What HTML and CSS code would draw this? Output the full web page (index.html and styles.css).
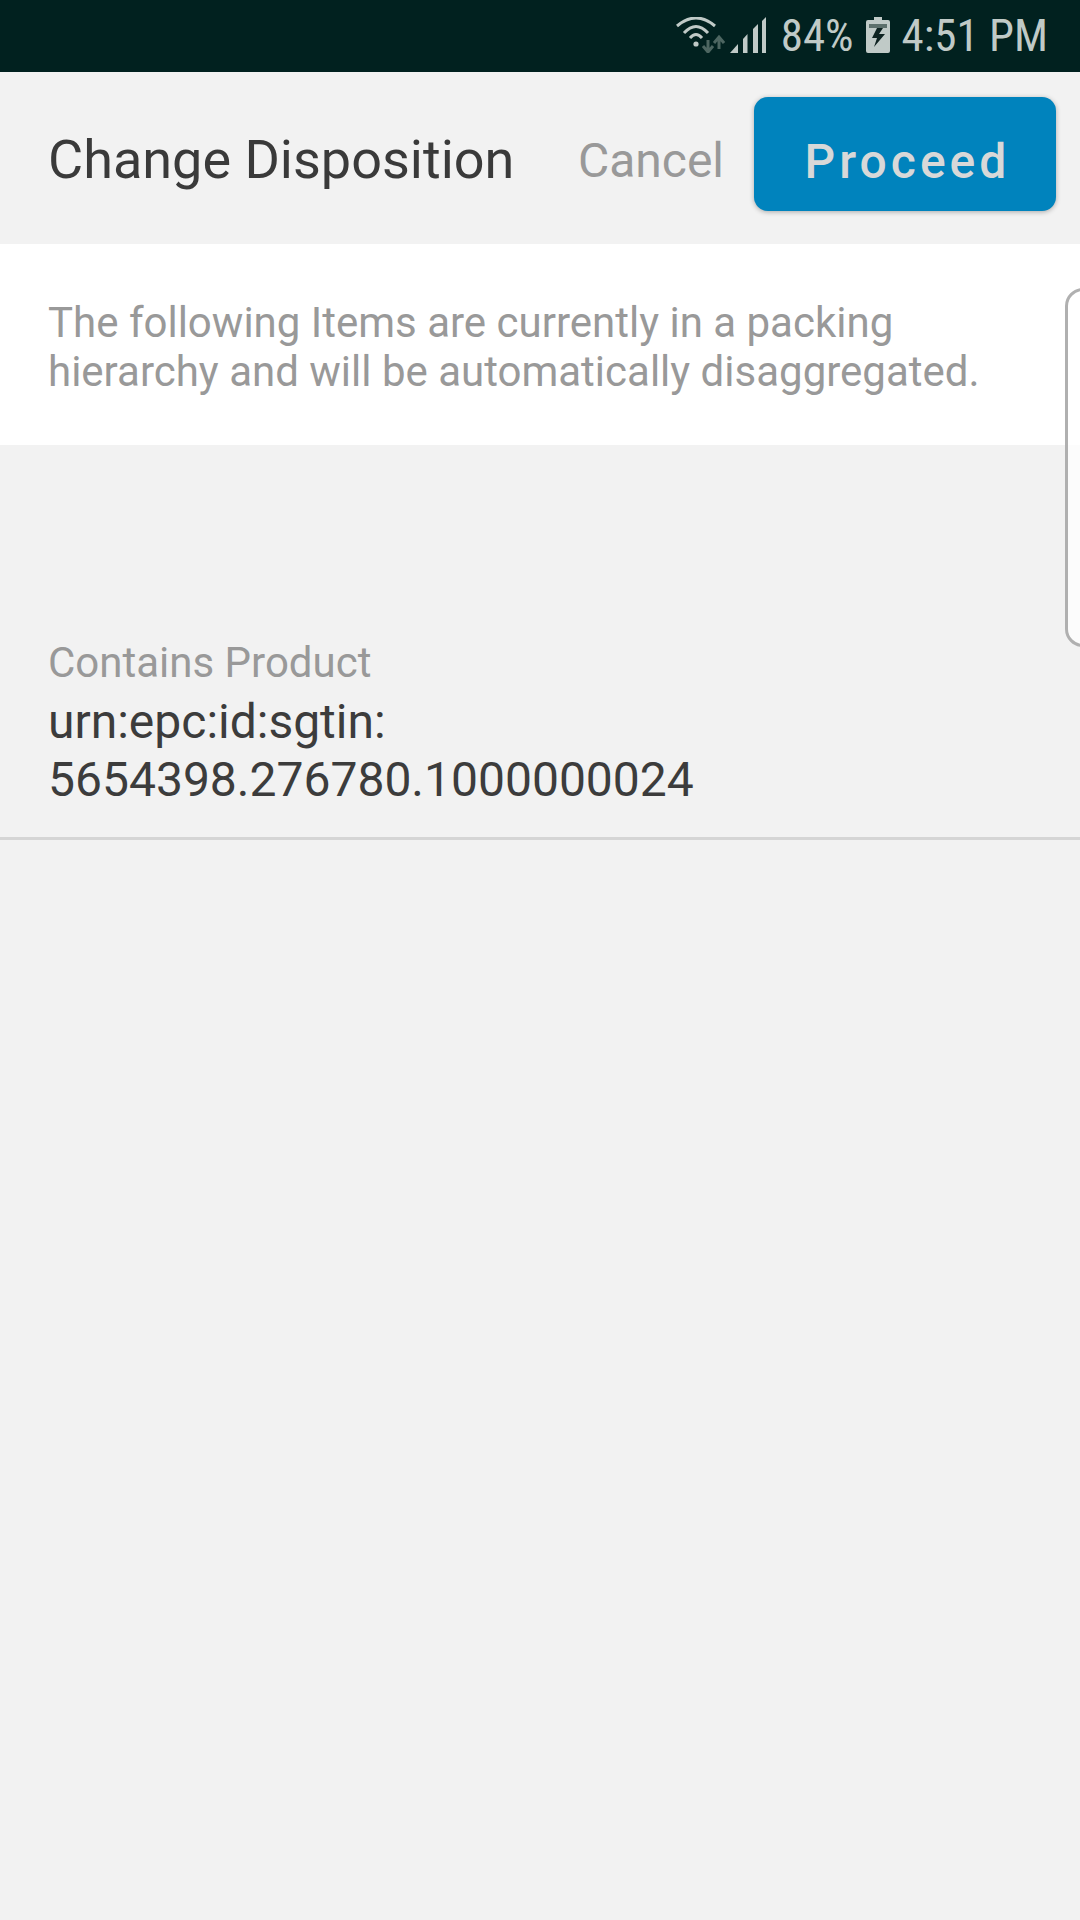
FILE: index.html
```html
<!DOCTYPE html>
<html lang="en">
<head>
    <meta charset="UTF-8">
    <meta name="viewport" content="width=device-width, initial-scale=1.0">
    <title>Change Disposition</title>
    <link rel="stylesheet" href="styles.css">
</head>
<body>
    <div class="status-bar">
        <svg class="status-icon wifi" width="49" height="36" viewBox="0 0 49 36">
            <path d="M1 9 Q20 -7 39 9" fill="none" stroke="#c0cac7" stroke-width="3"/>
            <path d="M8 16 Q20 3 32 16" fill="none" stroke="#c0cac7" stroke-width="3"/>
            <path d="M14 21 Q20 14 26 21" fill="none" stroke="#c0cac7" stroke-width="3"/>
            <circle cx="20" cy="27" r="2.6" fill="#c0cac7"/>
            <path d="M32 23v12M27 29l5 6 5-6" fill="none" stroke="#4d6661" stroke-width="3"/>
            <path d="M43 32v-12M38 26l5-6 5 6" fill="none" stroke="#4d6661" stroke-width="3"/>
        </svg>
        <svg class="status-icon signal" width="36" height="36" viewBox="0 0 36 36">
            <path d="M0 36 L8 27 V36Z" fill="#c0cac7"/>
            <path d="M13 22 L17.5 17 V36 H13Z" fill="#c0cac7"/>
            <path d="M23 12 L28 7 V36 H23Z" fill="#c0cac7"/>
            <path d="M32 4 L36 0 V36 H32Z" fill="#c0cac7"/>
        </svg>
        <span class="status-text">84%</span>
        <svg class="status-icon battery" width="24" height="36" viewBox="0 0 24 36">
            <path d="M8 0h8v3h6a2 2 0 0 1 2 2v29a2 2 0 0 1-2 2H2a2 2 0 0 1-2-2V5a2 2 0 0 1 2-2h6z" fill="#c0cac7"/>
            <rect x="3" y="7" width="18" height="4" fill="#5d706c"/>
            <path d="M11 11 L6 21 H11 L8 30 L19 17 H13 L17 11Z" fill="#0e2321"/>
        </svg>
        <span class="status-text">4:51 PM</span>
    </div>

    <header class="top-bar">
        <h1 class="title">Change Disposition</h1>
        <div class="cancel">Cancel</div>
        <button class="proceed">Proceed</button>
    </header>

    <section class="notice">
        <p>The following Items are currently in a packing hierarchy and will be automatically disaggregated.</p>
    </section>

    <section class="item">
        <div class="item-label">Contains Product</div>
        <div class="item-value">urn:epc:id:sgtin:<br>5654398.276780.1000000024</div>
    </section>

    <div class="side-panel"></div>
</body>
</html>
```

FILE: styles.css
```css
body {
    font-family: Roboto, sans-serif;
    margin: 0;
    width: 1080px;
    height: 1920px;
    overflow: hidden;
    background-color: #f2f2f2;
    position: relative;
}

.status-bar {
    height: 72px;
    background: #01211f;
    display: flex;
    align-items: center;
    justify-content: flex-end;
    padding-right: 32px;
    box-sizing: border-box;
}

.status-text {
    color: #c0cac7;
    font-size: 45px;
    font-stretch: 75%;
    line-height: 72px;
}

.status-icon {
    margin-bottom: 3px;
}

.wifi {
    margin-right: 5px;
}

.signal {
    margin-right: 15px;
}

.battery {
    margin-left: 12px;
    margin-right: 12px;
}

.top-bar {
    height: 172px;
    display: flex;
    align-items: center;
    padding: 0 24px 0 48px;
    box-sizing: border-box;
}

.title {
    flex: 1;
    margin: 0;
    padding-top: 2px;
    font-size: 54px;
    font-weight: 400;
    color: #3a3a3a;
}

.cancel {
    font-size: 48px;
    color: #999;
    margin-right: 30px;
    padding-top: 5px;
}

.proceed {
    width: 302px;
    height: 114px;
    margin-bottom: 8px;
    padding: 14px 0 0 5px;
    border: none;
    border-radius: 14px;
    background: #0083bd;
    color: #d8d8d8;
    font-family: Roboto, sans-serif;
    font-size: 48px;
    font-weight: 500;
    letter-spacing: 4px;
    box-shadow: 0 1px 5px rgba(0,0,0,0.3);
}

.notice {
    height: 201px;
    background: white;
    padding: 54px 48px 0;
    box-sizing: border-box;
}

.notice p {
    margin: 0;
    font-size: 42px;
    line-height: 49px;
    color: #999;
}

.item {
    height: 395px;
    padding-top: 194px;
    border-bottom: 3px solid #d5d5d5;
    box-sizing: border-box;
    padding-left: 48px;
}

.item-label {
    font-size: 42px;
    line-height: 48px;
    color: #999;
}

.item-value {
    margin-top: 6px;
    font-size: 48px;
    line-height: 58px;
    color: #3c3c3c;
}

.side-panel {
    position: absolute;
    left: 1065px;
    top: 288px;
    width: 60px;
    height: 359px;
    border: 3px solid #b0b0b0;
    border-radius: 18px;
    background: rgba(255,255,255,0.75);
    box-sizing: border-box;
}
```
